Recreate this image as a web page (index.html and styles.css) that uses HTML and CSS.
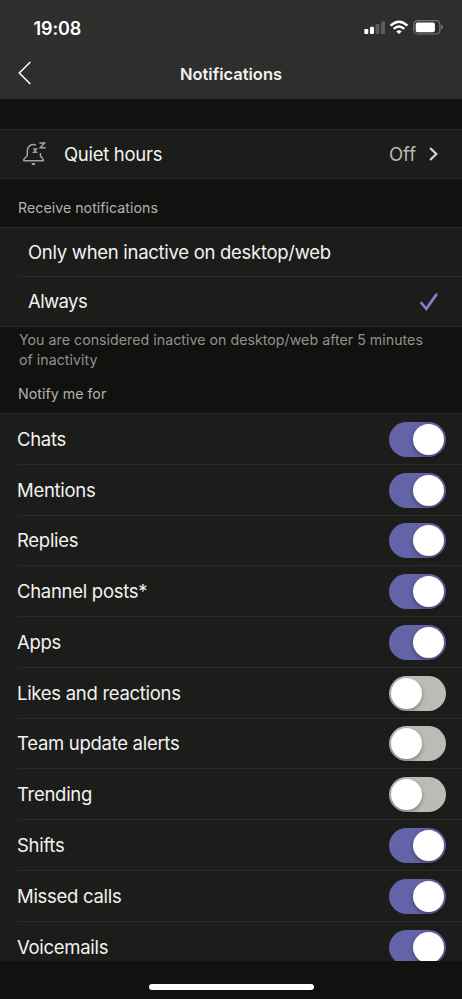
FILE: index.html
```html
<!DOCTYPE html>
<html lang="en">
<head>
<meta charset="utf-8">
<title>Notifications</title>
<link rel="stylesheet" href="styles.css">
</head>
<body>
<div class="screen">
  <header class="header">
    <div class="status">
      <span class="time">19:08</span>
      <svg class="status-icons" width="80" height="18" viewBox="0 0 80 18">
        <g fill="#fff"><rect x="1.3" y="10" width="4" height="5" rx="1"/><rect x="7" y="7.8" width="4" height="7.2" rx="1"/></g>
        <g fill="#5b5b5a"><rect x="12.5" y="5" width="4" height="10" rx="1"/><rect x="18" y="2.2" width="4" height="12.8" rx="1"/></g>
        <g fill="none" stroke="#fff" stroke-width="2.5"><path d="M27.6 6.6Q36 -1.2 44.4 6.6"/><path d="M30.7 9.9Q36 5.1 41.3 9.9"/></g>
        <path fill="#fff" d="M33.3 12.4Q36 10.3 38.7 12.4L36 15Z"/>
        <rect x="50.9" y="1.6" width="26" height="13.4" rx="3.8" fill="none" stroke="#777776" stroke-width="1.2"/>
        <rect x="52.7" y="3.5" width="19.2" height="9.7" rx="2" fill="#fff"/>
        <path fill="#777776" d="M78.2 6Q80 6.6 80 8.2T78.2 10.4Z"/>
      </svg>
    </div>
    <div class="nav">
      <svg class="back" width="14" height="24" viewBox="0 0 14 24" fill="none" stroke="#fff" stroke-width="1.5"><path d="M12.3 1 1.3 12l11 11"/></svg>
      <h1 class="title">Notifications</h1>
    </div>
  </header>
  <main class="content">
    <section class="quiet">
      <svg class="bell" width="26" height="27" viewBox="0 0 26 27" fill="none" stroke="#a3a29f" stroke-width="1.5">
        <path d="M14.1 4.9C8.5 3.6 5.3 6.8 5.3 11v4.6L1.7 19.6v1.2h19.6v-1.2l-2.8-3.4V13" stroke-linejoin="round"/>
        <path d="M9.3 23h4.2q-.5 2.4-2.1 2.4T9.3 23Z" fill="#a3a29f" stroke="none"/>
        <path d="M17.4 3h5.1l-4.3 4.8h5.4M11.2 9h3.1l-2.5 3.2h3.6"/>
      </svg>
      <span class="quiet-label">Quiet hours</span>
      <span class="quiet-value">Off</span>
      <svg class="chevron" width="10" height="16" viewBox="0 0 10 16" fill="none" stroke="#d2d2d0" stroke-width="2.3"><path d="m1.1 2 6.2 6-6.2 6"/></svg>
    </section>
    <h2 class="section-title receive">Receive notifications</h2>
    <section class="options">
      <div class="option"><span class="option-label">Only when inactive on desktop/web</span></div>
      <div class="option"><span class="option-label always">Always</span>
        <svg class="check" width="20" height="20" viewBox="0 0 20 20" fill="none" stroke="#7f83cb" stroke-width="2.7" stroke-linecap="round"><path d="m2.4 11 4.9 5.8L17.3 2.6"/></svg>
      </div>
    </section>
    <p class="note">You are considered inactive on desktop/web after 5 minutes<br>of inactivity</p>
    <h2 class="section-title notify">Notify me for</h2>
    <section class="toggles">
      <div class="row"><span>Chats</span><i class="switch on"></i></div>
      <div class="row"><span>Mentions</span><i class="switch on"></i></div>
      <div class="row"><span>Replies</span><i class="switch on"></i></div>
      <div class="row"><span>Channel posts*</span><i class="switch on"></i></div>
      <div class="row"><span>Apps</span><i class="switch on"></i></div>
      <div class="row"><span>Likes and reactions</span><i class="switch"></i></div>
      <div class="row"><span>Team update alerts</span><i class="switch"></i></div>
      <div class="row"><span>Trending</span><i class="switch"></i></div>
      <div class="row"><span>Shifts</span><i class="switch on"></i></div>
      <div class="row"><span>Missed calls</span><i class="switch on"></i></div>
      <div class="row"><span>Voicemails</span><i class="switch on"></i></div>
    </section>
  </main>
  <footer class="footer"><div class="home"></div></footer>
</div>
</body>
</html>
```
FILE: styles.css
```css
* { box-sizing: border-box; }
body { margin: 0; background: #11110f; }
.screen {
  width: 462px; height: 999px; overflow: hidden;
  display: flex; flex-direction: column;
  background: #11110f; color: #f3f2f0;
  font-family: Inter, "Liberation Sans", sans-serif; font-size: 18.5px; letter-spacing: -.29px;
}
.header { flex: none; height: 99px; background: #2e2e2c; }
.status { display: flex; height: 49px; padding: 19px 19px 0 33.5px; justify-content: space-between; }
.time { font-size: 18px; line-height: 19px; font-weight: 600; color: #fff; letter-spacing: -.1px; }
.status-icons { display: block; }
.nav { display: grid; grid-template-columns: 40px 1fr 40px; align-items: center; height: 50px; }
.back { margin-left: 18px; margin-top: -2px; }
.title { margin: 0; text-align: center; font-size: 16.5px; font-weight: 600; line-height: 24px; letter-spacing: 0; }
.content { flex: none; height: 862px; overflow: hidden; padding-top: 30px; }
.quiet {
  display: flex; align-items: center; height: 50px; padding: 0 23px 0 22px;
  background: #1c1c1a; border-top: 1px solid #2b2b29; border-bottom: 1px solid #2b2b29;
}
.bell { margin-right: 16px; margin-top: -2px; }
.quiet-value { margin-left: auto; margin-right: 13px; color: #b9b8b5; letter-spacing: 0; }
.section-title { margin: 0; padding-left: 18px; font-size: 14.2px; font-weight: 400; color: #b3b2af; letter-spacing: .03px; }
.receive { height: 48px; line-height: 57px; }
.options { background: #1c1c1a; border-top: 1px solid #2b2b29; border-bottom: 1px solid #2b2b29; }
.option { display: flex; align-items: center; justify-content: space-between; height: 48px; margin-left: 18px; padding: 0 23px 0 10px; }
.option + .option { height: 50px; border-top: 1px solid #2b2b29; }
.option-label { padding-bottom: 1px; }
.always { letter-spacing: -.6px; }
.note { margin: 0; padding: 3px 0 0 19px; height: 47px; font-size: 14.2px; line-height: 20px; color: #92918e; letter-spacing: .03px; white-space: nowrap; }
.notify { height: 39px; line-height: 40px; }
.toggles { background: #1c1c1a; border-top: 1px solid #2b2b29; }
.row { display: flex; align-items: center; justify-content: space-between; height: 50.78px; margin-left: 18px; padding-right: 16px; border-bottom: 1px solid #2b2b29; }
.row span { margin-left: -1px; }
.switch { width: 57px; height: 35px; margin-top: 1px; padding: 2px; border-radius: 18px; background: #bcbbb7; display: flex; }
.switch::before { content: ""; width: 31px; height: 31px; border-radius: 50%; background: #fff; box-shadow: 0 2px 4px #0005; }
.switch.on { background: #6264a7; justify-content: flex-end; }
.footer { flex: 1; display: flex; justify-content: center; align-items: flex-start; padding-top: 23px; background: #11110f; }
.home { width: 165px; height: 6px; border-radius: 3px; background: #fff; }
```
